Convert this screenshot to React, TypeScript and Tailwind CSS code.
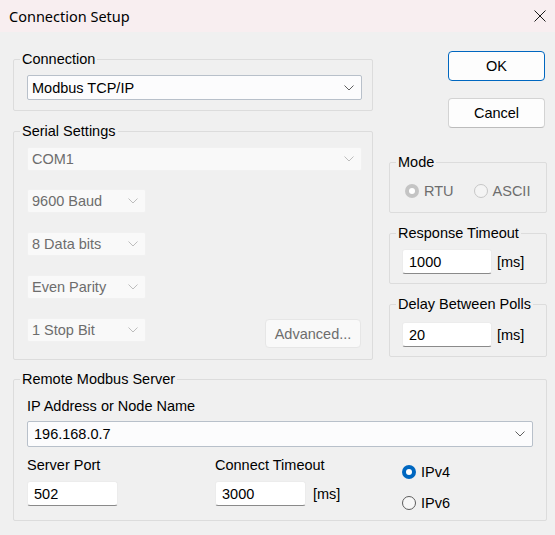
import React from 'react'

interface ComboProps {
  value: string
  className?: string
  disabled?: boolean
  pad?: string
}

interface GroupProps {
  title: string
  className?: string
  children: React.ReactNode
}

const Chevron = ({ color }: { color: string }) => (
  <svg width="10" height="6" viewBox="0 0 10 6" fill="none">
    <path d="M0.5 0.5L5 5L9.5 0.5" stroke={color} strokeWidth="1" />
  </svg>
)

const Combo = ({ value, className = '', disabled, pad = 'pl-[4px]' }: ComboProps) => (
  <div
    className={`flex items-center justify-between ${pad} pr-[7px] rounded-[2px] border ${
      disabled ? 'bg-[#f9f9f9] border-[#f1f1f1] text-[#6d6d6d]' : 'bg-[#fcfcfd] border-[#b8c0ca] text-black'
    } ${className}`}
  >
    <span>{value}</span>
    <Chevron color={disabled ? '#bdbdbd' : '#5f5f5f'} />
  </div>
)

const TextBox = ({ value, className = '' }: { value: string; className?: string }) => (
  <div
    className={`flex items-center h-[25px] pl-[6px] bg-white border border-[#ececec] border-b-[#8a8a8a] rounded-[3px] ${className}`}
  >
    {value}
  </div>
)

const Group = ({ title, className = '', children }: GroupProps) => (
  <fieldset className={`border border-[#dcdcdc] rounded-[2px] ${className}`}>
    <legend className="ml-[6px] px-[2px] leading-[16px]">{title}</legend>
    {children}
  </fieldset>
)

const Radio = ({ label, checked, disabled }: { label: string; checked?: boolean; disabled?: boolean }) => {
  let circle = 'border border-[#5c5c5c] bg-[#f7f7f7]'
  if (checked && !disabled) circle = 'bg-[#0067c0]'
  if (checked && disabled) circle = 'bg-[#c4c4c4]'
  if (!checked && disabled) circle = 'border border-[#c6c6c6] bg-[#f4f4f4]'
  return (
    <div className={`flex items-center gap-[5px] h-[16px] ${disabled ? 'text-[#6d6d6d]' : 'text-black'}`}>
      <span className={`w-[14px] h-[14px] rounded-full flex items-center justify-center ${circle}`}>
        {checked && <span className="w-[6px] h-[6px] rounded-full bg-white" />}
      </span>
      <span>{label}</span>
    </div>
  )
}

export default function App() {
  return (
    <div className="w-[555px] h-[535px] bg-[#f0f0f0] font-['Liberation_Sans',Arial,sans-serif] text-[14.5px] leading-[16px] text-black overflow-hidden">
      <div className="h-[32px] bg-[#f8eef0] flex items-center justify-between pl-[9px] pr-[9px] font-['Noto_Sans',sans-serif] text-[14.5px]">
        <span>Connection Setup</span>
        <svg width="12" height="12" viewBox="0 0 12 12" fill="none">
          <path d="M0.5 0.5L11.5 11.5M11.5 0.5L0.5 11.5" stroke="#1a1a1a" strokeWidth="1" />
        </svg>
      </div>

      <div className="pl-[13px] pr-[8px] pt-[19px]">
        <div className="flex gap-[16px]">
          <div className="w-[360px] flex flex-col">
            <Group title="Connection">
              <div className="pt-[8px] pl-[13px] pr-[10px] pb-[10px]">
                <Combo value="Modbus TCP/IP" className="h-[25px]" />
              </div>
            </Group>

            <Group title="Serial Settings" className="mt-[12px]">
              <div className="pt-[8px] pl-[13px] pr-[10px] pb-[11px] flex flex-col">
                <Combo value="COM1" disabled className="h-[24px]" />
                <Combo value="9600 Baud" disabled className="h-[24px] w-[119px] mt-[18px]" />
                <Combo value="8 Data bits" disabled className="h-[24px] w-[119px] mt-[19px]" />
                <Combo value="Even Parity" disabled className="h-[24px] w-[119px] mt-[19px]" />
                <div className="flex justify-between items-start mt-[19px]">
                  <Combo value="1 Stop Bit" disabled className="h-[24px] w-[119px]" />
                  <div className="w-[96px] h-[29px] mt-[1px] mr-[1px] flex items-center justify-center rounded-[4px] border border-[#e6e6e6] bg-[#f9f9f9] text-[#6d6d6d]">
                    Advanced...
                  </div>
                </div>
              </div>
            </Group>
          </div>

          <div className="flex-1 flex flex-col">
            <div className="flex flex-col items-end pr-[2px]">
              <div className="w-[97px] h-[30px] flex items-center justify-center rounded-[4px] border border-[#0067c0] bg-[#fdfdfd]">
                OK
              </div>
              <div className="w-[97px] h-[30px] mt-[17px] flex items-center justify-center rounded-[4px] border border-[#d3d3d3] border-b-[#bcbcbc] bg-[#fdfdfd]">
                Cancel
              </div>
            </div>

            <Group title="Mode" className="mt-[26px]">
              <div className="flex items-center gap-[20px] pl-[15px] pt-[13px] pb-[13px]">
                <Radio label="RTU" checked disabled />
                <Radio label="ASCII" disabled />
              </div>
            </Group>

            <Group title="Response Timeout" className="mt-[12px]">
              <div className="flex items-center pl-[12px] pt-[8px] pb-[9px]">
                <TextBox value="1000" className="w-[90px]" />
                <span className="ml-[5px]">[ms]</span>
              </div>
            </Group>

            <Group title="Delay Between Polls" className="mt-[12px]">
              <div className="flex items-center pl-[12px] pt-[10px] pb-[9px]">
                <TextBox value="20" className="w-[90px]" />
                <span className="ml-[5px]">[ms]</span>
              </div>
            </Group>
          </div>
        </div>

        <Group title="Remote Modbus Server" className="mt-[11px]">
          <div className="pl-[13px] pr-[13px] pt-[11px] pb-[9px]">
            <div>IP Address or Node Name</div>
            <Combo value="196.168.0.7" pad="pl-[6px]" className="h-[26px] mt-[7px]" />
            <div className="flex mt-[10px]">
              <div className="w-[188px] flex flex-col">
                <span>Server Port</span>
                <TextBox value="502" className="w-[91px] mt-[8px]" />
              </div>
              <div className="w-[187px] flex flex-col">
                <span>Connect Timeout</span>
                <div className="flex items-center mt-[8px]">
                  <TextBox value="3000" className="w-[91px]" />
                  <span className="ml-[7px]">[ms]</span>
                </div>
              </div>
              <div className="flex flex-col gap-[15px] mt-[7px]">
                <Radio label="IPv4" checked />
                <Radio label="IPv6" />
              </div>
            </div>
          </div>
        </Group>
      </div>
    </div>
  )
}
